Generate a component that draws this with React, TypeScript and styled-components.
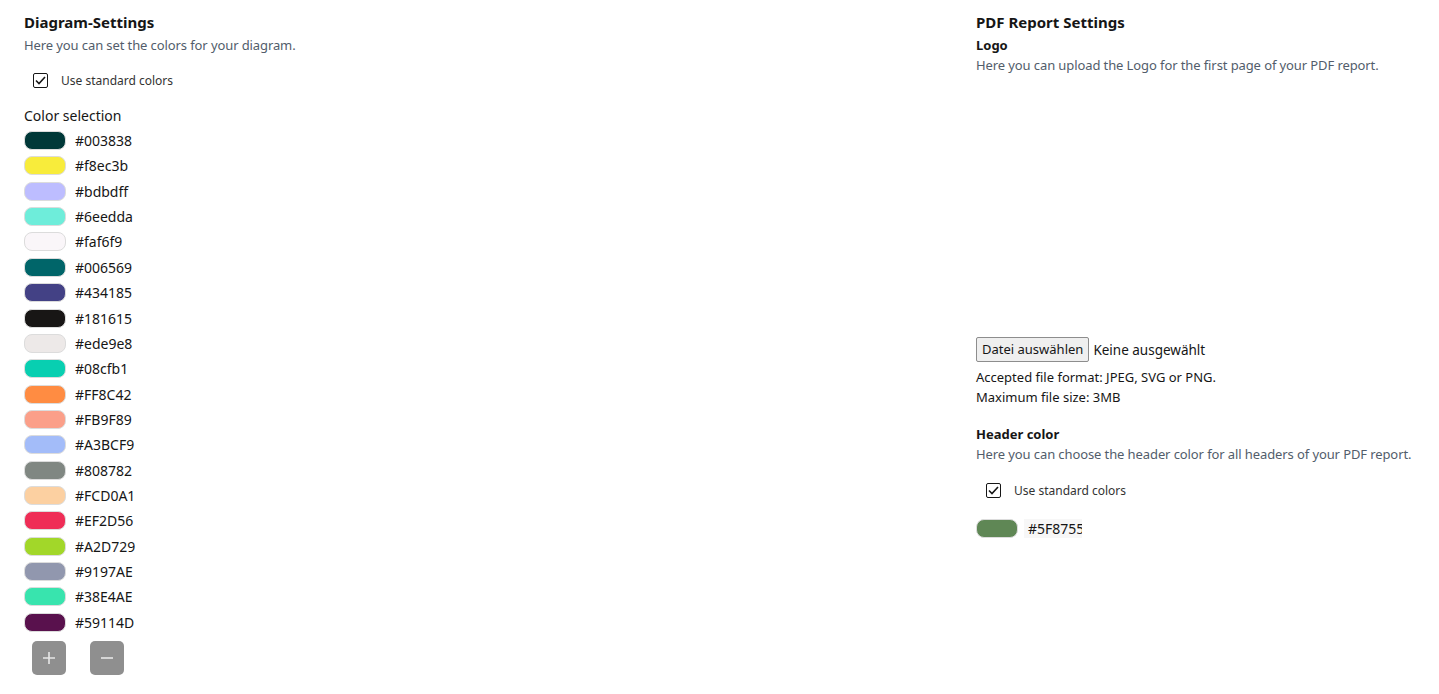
import React from "react";
import styled, { createGlobalStyle } from "styled-components";

const GlobalStyle = createGlobalStyle`
  html, body {
    margin: 0;
    padding: 0;
    background: #ffffff;
  }
  body {
    font-family: "Noto Sans", "Open Sans", sans-serif;
    color: #161616;
  }
`;

const Page = styled.div`
  display: flex;
  padding: 12px 24px 0 24px;
`;

const Column = styled.section<{ $width?: number }>`
  display: flex;
  flex-direction: column;
  flex: ${(p) => (p.$width ? `0 0 ${p.$width}px` : "1 1 auto")};
`;

const Title = styled.h2`
  margin: 0;
  font-size: 15px;
  line-height: 20px;
  font-weight: 700;
  color: #161616;
`;

const SubTitle = styled.h3<{ $top?: number }>`
  margin: ${(p) => p.$top ?? 3}px 0 0 0;
  font-size: 13px;
  line-height: 20px;
  font-weight: 700;
  color: #161616;
`;

const Description = styled.p<{ $top?: number }>`
  margin: ${(p) => p.$top ?? 3}px 0 0 0;
  font-size: 13px;
  line-height: 20px;
  letter-spacing: -0.1px;
  white-space: nowrap;
  color: #525d6b;
`;

const CheckRow = styled.label<{ $indent: number; $top: number }>`
  display: flex;
  align-items: center;
  gap: 13px;
  margin: ${(p) => p.$top}px 0 0 ${(p) => p.$indent}px;
  height: 20px;
  font-size: 12px;
  color: #333;
  cursor: pointer;
`;

const Box = styled.span`
  width: 15px;
  height: 15px;
  box-sizing: border-box;
  border: 1.5px solid #161616;
  border-radius: 2px;
  display: flex;
  align-items: center;
  justify-content: center;
`;

const Label = styled.div`
  margin-top: 16px;
  font-size: 14px;
  line-height: 20px;
  color: #161616;
`;

const ColorList = styled.ul`
  list-style: none;
  margin: 5px 0 0 0;
  padding: 0;
  display: flex;
  flex-direction: column;
  gap: 6.37px;
`;

const ColorRow = styled.li`
  display: flex;
  align-items: center;
  gap: 9px;
  height: 19px;
`;

const Swatch = styled.span<{ $color: string }>`
  width: 42px;
  height: 19px;
  box-sizing: border-box;
  border-radius: 8px;
  border: 1px solid #dcdcdc;
  background: ${(p) => p.$color};
`;

const HexText = styled.span`
  font-size: 14px;
  color: #161616;
`;

const HexInput = styled.span`
  display: inline-block;
  width: 54px;
  padding-left: 4px;
  overflow: hidden;
  white-space: nowrap;
  background: #f7f7f7;
  font-size: 14px;
  line-height: 19px;
  color: #161616;
`;

const ButtonRow = styled.div`
  display: flex;
  gap: 24px;
  margin: 9px 0 0 8px;
`;

const IconButton = styled.button`
  width: 34px;
  height: 34px;
  border: none;
  border-radius: 5px;
  background: #8f8f8f;
  color: #e4e4e4;
  display: flex;
  align-items: center;
  justify-content: center;
  padding: 0;
  cursor: pointer;
`;

const LogoArea = styled.div`
  height: 262px;
`;

const FileRow = styled.div`
  display: flex;
  align-items: center;
  gap: 4px;
  font-size: 13.5px;
  color: #161616;
`;

const FileButton = styled.span`
  display: inline-block;
  box-sizing: border-box;
  height: 25px;
  line-height: 23px;
  padding: 0 5px;
  border: 1px solid #8d8d8d;
  border-radius: 2px;
  background: #efefef;
  font-size: 13px;
`;

const Note = styled.div<{ $top?: number }>`
  margin-top: ${(p) => p.$top ?? 0}px;
  font-size: 13px;
  line-height: 20px;
  color: #161616;
`;

const HeaderColorRow = styled.div`
  display: flex;
  align-items: center;
  gap: 6px;
  margin-top: 19px;
`;

const CheckBox = ({ children, indent, top }: { children: string; indent: number; top: number }) => (
  <CheckRow $indent={indent} $top={top}>
    <Box>
      <svg width="11" height="9" viewBox="0 0 11 9" fill="none">
        <path d="M1 4.5 L4 7.5 L10 1" stroke="#161616" strokeWidth="1.6" />
      </svg>
    </Box>
    <span>{children}</span>
  </CheckRow>
);

const colors = [
  "#003838",
  "#f8ec3b",
  "#bdbdff",
  "#6eedda",
  "#faf6f9",
  "#006569",
  "#434185",
  "#181615",
  "#ede9e8",
  "#08cfb1",
  "#FF8C42",
  "#FB9F89",
  "#A3BCF9",
  "#808782",
  "#FCD0A1",
  "#EF2D56",
  "#A2D729",
  "#9197AE",
  "#38E4AE",
  "#59114D",
];

export default function App() {
  return (
    <Page>
      <GlobalStyle />
      <Column $width={952}>
        <Title>Diagram-Settings</Title>
        <Description>Here you can set the colors for your diagram.</Description>
        <CheckBox indent={9} top={15}>
          Use standard colors
        </CheckBox>
        <Label>Color selection</Label>
        <ColorList>
          {colors.map((c) => (
            <ColorRow key={c}>
              <Swatch $color={c} />
              <HexText>{c}</HexText>
            </ColorRow>
          ))}
        </ColorList>
        <ButtonRow>
          <IconButton aria-label="add">
            <svg width="14" height="14" viewBox="0 0 14 14">
              <path d="M7 1 V13 M1 7 H13" stroke="#e6e6e6" strokeWidth="1.6" />
            </svg>
          </IconButton>
          <IconButton aria-label="remove">
            <svg width="14" height="14" viewBox="0 0 14 14">
              <path d="M1 7 H13" stroke="#e6e6e6" strokeWidth="1.6" />
            </svg>
          </IconButton>
        </ButtonRow>
      </Column>

      <Column>
        <Title>PDF Report Settings</Title>
        <SubTitle>Logo</SubTitle>
        <Description $top={0}>Here you can upload the Logo for the first page of your PDF report.</Description>
        <LogoArea />
        <FileRow>
          <FileButton>Datei auswählen</FileButton>
          <span>Keine ausgewählt</span>
        </FileRow>
        <Note $top={5}>Accepted file format: JPEG, SVG or PNG.</Note>
        <Note>Maximum file size: 3MB</Note>
        <SubTitle $top={17}>Header color</SubTitle>
        <Description $top={0}>Here you can choose the header color for all headers of your PDF report.</Description>
        <CheckBox indent={10} top={16}>
          Use standard colors
        </CheckBox>
        <HeaderColorRow>
          <Swatch $color="#5F8755" />
          <HexInput>#5F8755</HexInput>
        </HeaderColorRow>
      </Column>
    </Page>
  );
}
